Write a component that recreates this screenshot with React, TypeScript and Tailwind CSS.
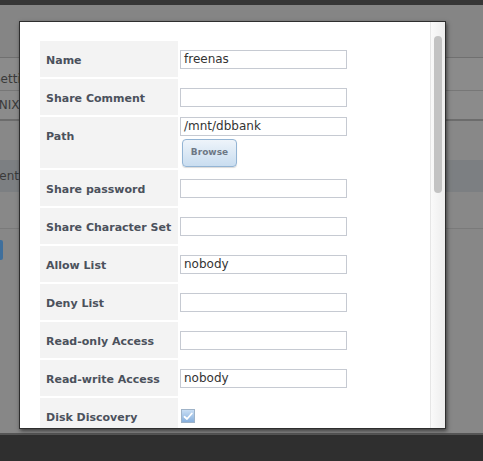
import React from 'react';

interface Field {
  label: string;
  kind: 'text' | 'path' | 'check';
  value?: string;
}

const fields: Field[] = [
  { label: 'Name', kind: 'text', value: 'freenas' },
  { label: 'Share Comment', kind: 'text' },
  { label: 'Path', kind: 'path', value: '/mnt/dbbank' },
  { label: 'Share password', kind: 'text' },
  { label: 'Share Character Set', kind: 'text' },
  { label: 'Allow List', kind: 'text', value: 'nobody' },
  { label: 'Deny List', kind: 'text' },
  { label: 'Read-only Access', kind: 'text' },
  { label: 'Read-write Access', kind: 'text', value: 'nobody' },
  { label: 'Disk Discovery', kind: 'check' },
];

function TextInput({ value }: { value?: string }) {
  return (
    <div className="w-[167px] h-[19px] border border-[#c6cad2] bg-white px-[3px] text-[12px] leading-[17px] text-[#333]">
      {value}
    </div>
  );
}

function FieldCell({ field }: { field: Field }) {
  if (field.kind === 'path') {
    return (
      <div className="flex flex-col items-start pb-[1px]">
        <TextInput value={field.value} />
        <button className="mt-[3px] ml-[2px] w-[55px] h-[28px] rounded-[4px] border border-[#93b4d4] bg-gradient-to-b from-[#eef4fa] to-[#c9ddf0] text-[9px] font-bold text-[#6d7886] shadow-[0_1px_1px_rgba(0,0,0,0.15)]">
          Browse
        </button>
      </div>
    );
  }
  if (field.kind === 'check') {
    return (
      <div className="flex items-center h-[36px] pl-[1px]">
        <div className="w-[14px] h-[14px] border border-[#9fb3c8] bg-gradient-to-b from-[#c9def4] to-[#86afdd] flex items-center justify-center">
          <svg width="10" height="9" viewBox="0 0 10 9">
            <path d="M1.5 4.8 L4 7 L8.8 1.5" fill="none" stroke="#fff" strokeWidth="1.8" strokeLinecap="round" strokeLinejoin="round" />
          </svg>
        </div>
      </div>
    );
  }
  return (
    <div className="flex items-center h-[36px]">
      <TextInput value={field.value} />
    </div>
  );
}

export default function App() {
  return (
    <div className="relative w-[483px] h-[461px] overflow-hidden bg-[#878787] font-['DejaVu_Sans',sans-serif] flex flex-col">
      {/* Page behind the dialog */}
      <div className="h-[5px] bg-[#363636]" />
      <div className="h-[52px] bg-[#858585]" />
      <div className="h-[33px] border-t border-[#707070] bg-[#8b8b8b] pt-[14px] text-[12px] leading-[14px] text-[#3a3a3a] whitespace-nowrap">
        <span className="-ml-[7px]">Settings</span>
      </div>
      <div className="h-[29px] border-t border-[#777] bg-[#8b8b8b] flex items-center text-[12px] text-[#3a3a3a] whitespace-nowrap">
        <span className="-ml-[10px]">UNIX</span>
      </div>
      <div className="h-[41px] border-t-2 border-[#6c6c6c] bg-[#888]" />
      <div className="h-[32px] bg-[#7c7f82] flex items-center text-[12px] text-[#3a3a3a] whitespace-nowrap">
        <span className="-ml-[60px]">Management</span>
      </div>
      <div className="h-[37px] border-b border-[#7a7a7a] bg-[#888]" />
      <div className="h-[11px]" />
      <div className="h-[20px] w-[3px] rounded-r-[2px] bg-[#3f6f9c]" />
      <div className="flex-1" />
      <div className="h-[28px] border-t-2 border-[#555] bg-[#2f2f2f]" />

      {/* Dialog */}
      <div className="absolute left-[19px] top-[21px] w-[427px] h-[408px] border border-[#2e2e2e] bg-white shadow-[1px_2px_4px_rgba(0,0,0,0.55)] flex overflow-hidden">
        <div className="flex-1 pl-[20px] pt-[19px] overflow-hidden">
          <div className="grid grid-cols-[138px_167px] gap-x-[2px] gap-y-[2px]">
            {fields.map((field) => (
              <React.Fragment key={field.label}>
                <div className="bg-[#f3f3f3] px-[6px] pt-[13px] pb-[9px] text-[11px] leading-[14px] font-bold text-[#4b515c] whitespace-nowrap">
                  {field.label}
                </div>
                <FieldCell field={field} />
              </React.Fragment>
            ))}
          </div>
        </div>
        {/* Scrollbar */}
        <div className="w-[15px] h-full border-l border-[#e6e6e6] bg-gradient-to-r from-[#fafafa] to-[#ededed] pt-[14px] pl-[3px]">
          <div className="w-[8px] h-[157px] rounded-full bg-[#c3c3c3]" />
        </div>
      </div>
    </div>
  );
}
